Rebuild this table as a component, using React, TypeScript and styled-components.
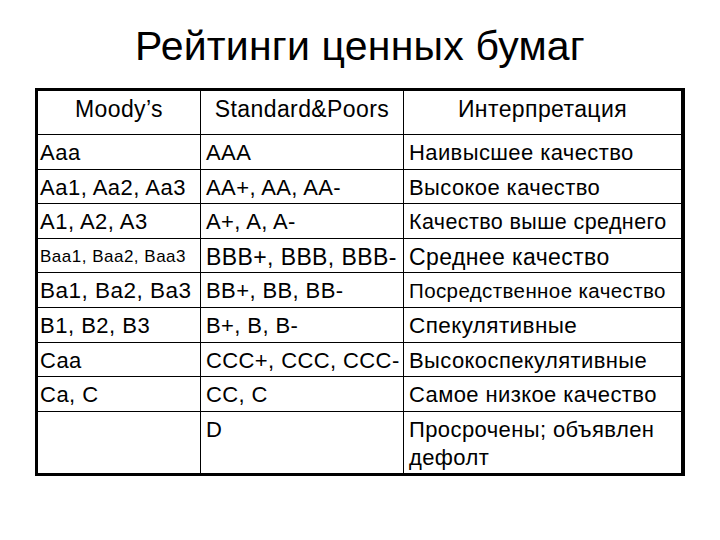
import React from 'react';
import styled, {createGlobalStyle} from 'styled-components';

const GlobalStyle = createGlobalStyle`
  html, body {
    margin: 0;
    padding: 0;
    background: #fff;
  }
  body {
    font-family: "Liberation Sans", Arial, sans-serif;
    color: #000;
  }
`;

const Page = styled.div`
  width: 720px;
  height: 540px;
  display: flex;
  flex-direction: column;
  align-items: center;
`;

const Title = styled.h1`
  margin: 0;
  height: 88px;
  display: flex;
  align-items: center;
  font-weight: normal;
  font-size: 41px;
  letter-spacing: 0.2px;
  line-height: 1;
  padding-top: 4px;
  box-sizing: border-box;
`;

const Table = styled.div`
  width: 650px;
  height: 388px;
  box-sizing: border-box;
  border: 3px solid #000;
  background: #000;
  display: grid;
  grid-template-columns: 162px 202px 277px;
  grid-template-rows: 43px repeat(8, 33.6px) 1fr;
  gap: 1px;
  letter-spacing: 0.4px;
`;

const HeadCell = styled.div`
  background: #fff;
  font-size: 23px;
  line-height: 26px;
  padding-top: 5px;
  text-align: center;
`;

const Cell = styled.div<{$size?: number; $first?: boolean}>`
  background: #fff;
  font-size: ${p => p.$size || 22}px;
  letter-spacing: ${p => (p.$first ? 0.5 : 0.4)}px;
  line-height: 24px;
  padding: 6px 0 0 ${p => (p.$first ? 2 : 5)}px;
  white-space: nowrap;
`;

const WrapCell = styled.div`
  background: #fff;
  font-size: 22px;
  line-height: 28px;
  padding: 4px 4px 0 5px;
`;

type Row = [string, string, string, number?, number?, number?];

const rows: Row[] = [
  ['Aaa', 'AAA', 'Наивысшее качество'],
  ['Aa1, Aa2, Aa3', 'AA+, AA, AA-', 'Высокое качество'],
  ['A1, A2, A3', 'A+, A, A-', 'Качество выше среднего', 22, 22, 21.5],
  ['Baa1, Baa2, Baa3', 'BBB+, BBB, BBB-', 'Среднее качество', 17, 23, 23],
  ['Ba1, Ba2, Ba3', 'BB+, BB, BB-', 'Посредственное качество', 22.5, 22, 20.5],
  ['B1, B2, B3', 'B+, B, B-', 'Спекулятивные', 22, 22, 22.5],
  ['Caa', 'CCC+, CCC, CCC-', 'Высокоспекулятивные'],
  ['Ca, C', 'CC, C', 'Самое низкое качество'],
];

const App = () => (
  <Page>
    <GlobalStyle/>
    <Title>Рейтинги ценных бумаг</Title>
    <Table>
      <HeadCell>Moody’s</HeadCell>
      <HeadCell>Standard&amp;Poors</HeadCell>
      <HeadCell>Интерпретация</HeadCell>
      {rows.map((r, i) => (
        <React.Fragment key={i}>
          <Cell $first $size={r[3]}>{r[0]}</Cell>
          <Cell $size={r[4]}>{r[1]}</Cell>
          <Cell $size={r[5]}>{r[2]}</Cell>
        </React.Fragment>
      ))}
      <WrapCell/>
      <WrapCell>D</WrapCell>
      <WrapCell>Просрочены; объявлен<br/>дефолт</WrapCell>
    </Table>
  </Page>
);

export default App;
